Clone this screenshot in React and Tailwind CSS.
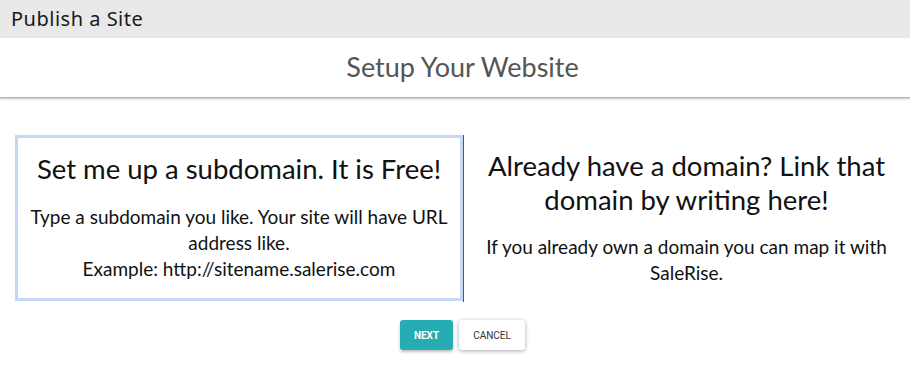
export default function App() {
  const body = { fontFamily: '"Lato", "Noto Sans", sans-serif' };
  return (
    <div className="w-[910px] h-[368px] bg-white overflow-hidden" style={body}>
      <div className="h-[38px] bg-[#e9e9e9] flex items-center pl-[11px]">
        <span className="text-[20px] tracking-[0.5px] text-[#1a1a1a]" style={{ fontFamily: '"Noto Sans", sans-serif' }}>Publish a Site</span>
      </div>
      <div className="h-[60px] flex items-center justify-center border-b border-[#b5b5b5] shadow-[0_1px_2px_rgba(0,0,0,0.25)] pl-[15px]">
        <span className="text-[27px] text-[#555]">Setup Your Website</span>
      </div>
      <div className="flex pl-[15px] pr-[1px] mt-[37px]">
        <div className="w-[448px] h-[166px] border-[3px] border-[#c6d8f5] flex flex-col items-center text-center pt-[14px]">
          <div className="text-[27.5px] leading-[34px] text-[#111]">Set me up a subdomain. It is Free!</div>
          <div className="text-[19px] leading-[26px] text-[#111] mt-[18px] px-[8px]">
            Type a subdomain you like. Your site will have URL address like.
            <br />
            Example: http://sitename.salerise.com
          </div>
        </div>
        <div className="flex-1 h-[167px] border-l border-[#2c5aa8] flex flex-col items-center text-center pt-[14px] px-[18px]">
          <div className="text-[27.5px] leading-[34px] text-[#111]">Already have a domain? Link that domain by writing here!</div>
          <div className="text-[19px] leading-[26px] text-[#111] mt-[17px]">
            If you already own a domain you can map it with SaleRise.
          </div>
        </div>
      </div>
      <div className="flex justify-center gap-[6px] mt-[18px] pl-[15px]">
        <button className="w-[53px] h-[30px] rounded-[3px] bg-[#26adb4] text-white text-[10px] font-bold shadow-[0_2px_3px_rgba(0,0,0,0.25)]" style={{ fontFamily: '"Roboto", sans-serif' }}>NEXT</button>
        <button className="w-[66px] h-[30px] rounded-[3px] bg-white text-[#333] text-[10px] shadow-[0_1px_4px_rgba(0,0,0,0.35)]" style={{ fontFamily: '"Roboto", sans-serif' }}>CANCEL</button>
      </div>
    </div>
  );
}
